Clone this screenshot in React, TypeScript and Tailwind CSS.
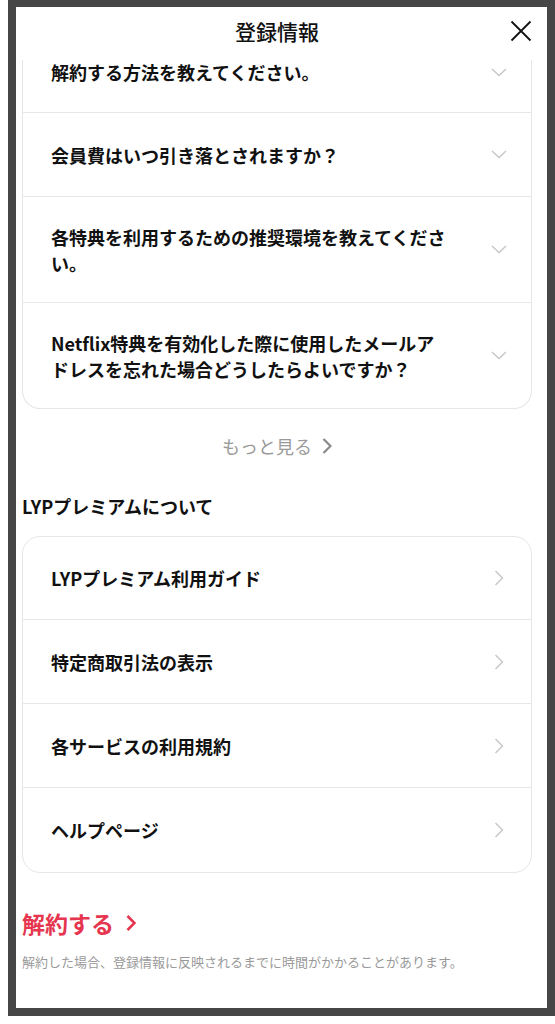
import React from 'react';

const faqs = [
  '会員費はいつ引き落とされますか？',
  '各特典を利用するための推奨環境を教えてください。',
  'Netflix特典を有効化した際に使用したメールアドレスを忘れた場合どうしたらよいですか？',
];

const links = ['LYPプレミアム利用ガイド', '特定商取引法の表示', '各サービスの利用規約', 'ヘルプページ'];

function ChevronDown() {
  return (
    <svg width="16" height="9" viewBox="0 0 16 9" fill="none">
      <path d="M1 1l7 6.5L15 1" stroke="#c6c6c6" strokeWidth="1.4" />
    </svg>
  );
}

function ChevronRight({ color = '#c6c6c6', w = 1.4 }: { color?: string; w?: number }) {
  return (
    <svg width="10" height="16" viewBox="0 0 10 16" fill="none">
      <path d="M1.5 1l7 7-7 7" stroke={color} strokeWidth={w} />
    </svg>
  );
}

export default function App() {
  return (
    <div
      className="w-[555px] h-[1024px] bg-white pl-2 overflow-hidden"
      style={{ fontFamily: '"Noto Sans CJK JP", "Noto Sans", sans-serif' }}
    >
      <div className="h-[1016px] border-x-8 border-t-[7px] border-b-8 border-[#464646] bg-white flex flex-col overflow-hidden">
        <header className="h-[53px] shrink-0 grid grid-cols-[1fr_auto_1fr] items-center pl-[6px] pr-[15px] pb-[5px] bg-white">
          <div />
          <h1 className="text-[21px] font-medium text-[#111] leading-none">登録情報</h1>
          <div className="flex justify-end">
            <svg width="22" height="22" viewBox="0 0 22 22" fill="none">
              <path d="M1.5 1.5l19 19M20.5 1.5l-19 19" stroke="#111" strokeWidth="1.8" />
            </svg>
          </div>
        </header>

        <div className="flex-1 overflow-hidden pl-[6px] pr-[15px]">
          {/* list is scrolled: its top edge sits under the header */}
          <div className="border-x border-b border-[#e6e6e6] rounded-b-[18px] divide-y divide-[#e8e8e8]">
            <div className="flex items-start h-[53px] pl-[28px] pr-[24px]">
              <p className="w-[399px] text-[18px] leading-[24px] font-bold text-[#111]">解約する方法を教えてください。</p>
              <div className="flex-1 h-[24px] flex items-center justify-end">
                <ChevronDown />
              </div>
            </div>
            {faqs.map((q) => (
              <div key={q} className="flex items-center min-h-[84px] py-[26.5px] pl-[28px] pr-[24px]">
                <p className="w-[399px] text-[18px] leading-[26px] font-bold text-[#111]">{q}</p>
                <div className="flex-1 flex justify-end">
                  <ChevronDown />
                </div>
              </div>
            ))}
          </div>

          <div className="mt-[24px] flex items-center justify-center gap-[10px] text-[18px] leading-[26px] text-[#9a9a9a]">
            <span>もっと見る</span>
            <ChevronRight color="#8a8a8a" w={2.2} />
          </div>

          <h2 className="mt-[34px] text-[18px] leading-[26px] font-bold text-[#111]">LYPプレミアムについて</h2>

          <div className="mt-[17px] border border-[#e6e6e6] rounded-[18px] divide-y divide-[#e8e8e8]">
            {links.map((l) => (
              <div key={l} className="flex items-center h-[84px] first:h-[83px] pl-[28px] pr-[27px]">
                <p className="flex-1 text-[18px] leading-[26px] font-bold text-[#111]">{l}</p>
                <ChevronRight />
              </div>
            ))}
          </div>

          <div className="mt-[34px] flex items-center gap-[12px] text-[23px] leading-[32px] font-bold text-[#e6364f]">
            <span>解約する</span>
            <ChevronRight color="#e6364f" w={2.6} />
          </div>
          <p className="mt-[13px] text-[13px] leading-[20px] text-[#9a9a9a]">
            解約した場合、登録情報に反映されるまでに時間がかかることがあります。
          </p>
        </div>
      </div>
    </div>
  );
}
